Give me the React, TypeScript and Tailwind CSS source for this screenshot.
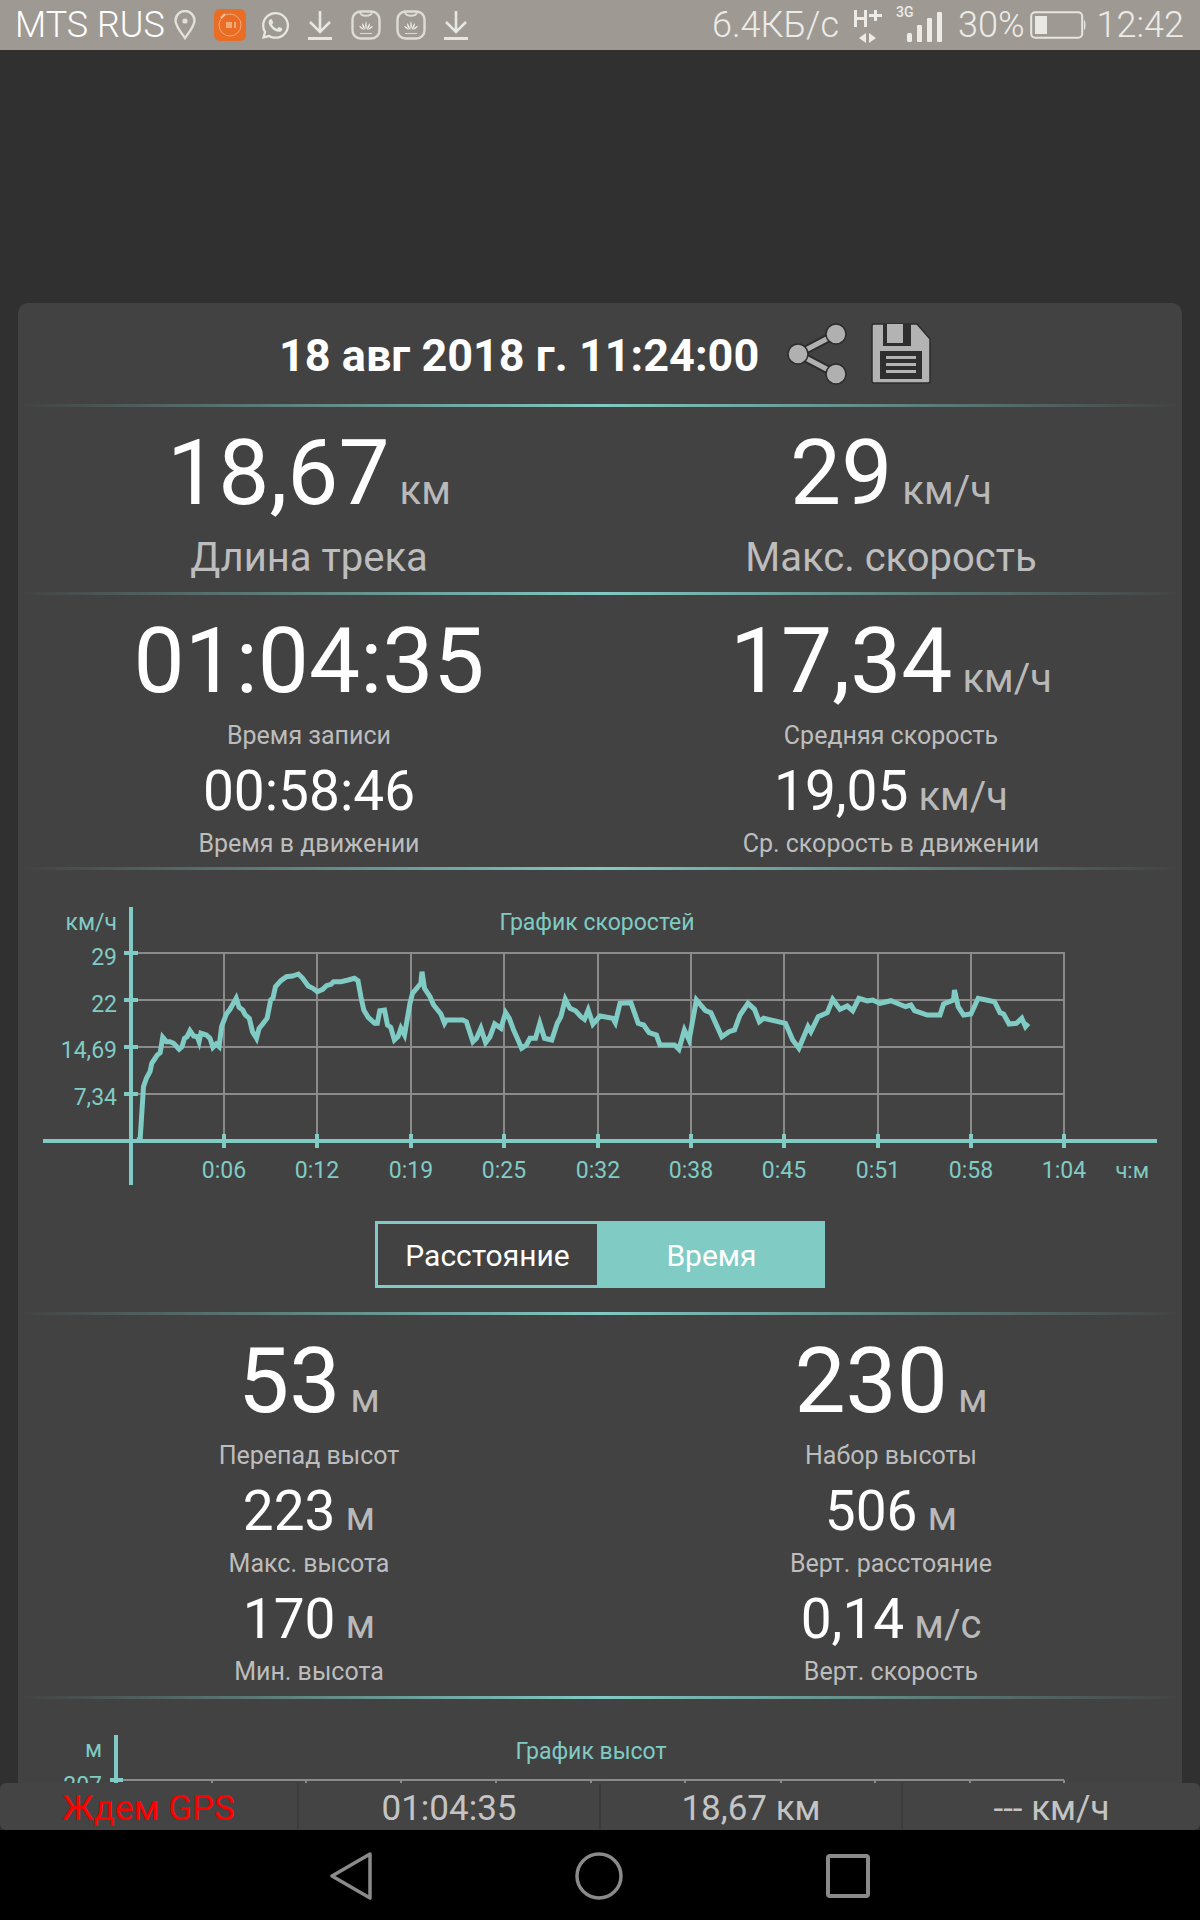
import React from 'react';
import { FaWhatsapp } from 'react-icons/fa';

const TEAL = '#80cbc4';
const GRID_X = [224, 317, 411, 504, 598, 691, 784, 878, 971, 1064];
const GRID_Y = [953, 1000, 1047, 1094];
const X_LABELS = ['0:06', '0:12', '0:19', '0:25', '0:32', '0:38', '0:45', '0:51', '0:58', '1:04'];
const Y_LABELS: [string, number][] = [['29', 965], ['22', 1012], ['14,69', 1058], ['7,34', 1105]];
const ALT_GRID_X = [212, 306, 401, 496, 591, 685, 781, 875, 970, 1064];

// traced from the crops: [x, y] in crop units, converted to page px below
const LEFT_TRACE = [
  [297, 750], [303, 745], [312, 590], [320, 565], [330, 545], [335, 520], [350, 495], [358, 488], [365, 442], [375, 455],
  [385, 455], [395, 460], [410, 478], [418, 470], [425, 445], [432, 440], [440, 422], [450, 438], [460, 440], [465, 455],
  [470, 430], [485, 435], [495, 445], [503, 472], [512, 462], [520, 470], [527, 410], [540, 372], [550, 358], [567, 325],
  [575, 352], [585, 360], [592, 375], [603, 385], [612, 425], [623, 445], [630, 415], [640, 402], [652, 385], [662, 330],
  [668, 325], [675, 290], [690, 272], [705, 260], [722, 258], [738, 252], [750, 265], [765, 288], [778, 295], [790, 305],
  [805, 298], [815, 287], [828, 283], [835, 275], [855, 275], [875, 270], [892, 265], [902, 272], [910, 320], [918, 360],
  [930, 382], [948, 400], [955, 400], [962, 362], [975, 360], [983, 405], [992, 412], [1002, 450], [1012, 440], [1020, 415],
  [1030, 435], [1045, 340], [1052, 310], [1075, 280], [1078, 245], [1085, 295], [1100, 320], [1110, 345], [1130, 372], [1140, 400],
  [1145, 390], [1190, 390], [1200, 395], [1218, 455], [1228, 445], [1240, 415], [1253, 458], [1265, 440], [1278, 402], [1295, 415],
  [1308, 368], [1318, 385], [1330, 420], [1340, 445], [1352, 475], [1365, 465], [1375, 445], [1390, 445], [1402, 400], [1415, 445],
  [1435, 450], [1450, 400], [1460, 380], [1472, 328], [1485, 355], [1500, 362], [1515, 380], [1525, 388], [1535, 360], [1548, 402],
];
const RIGHT_TRACE = [
  [0, 378], [35, 385], [42, 398], [55, 340], [85, 338], [105, 400], [120, 405], [135, 428], [155, 435], [165, 465],
  [205, 465], [217, 478], [232, 420], [245, 450], [265, 330], [290, 362], [305, 368], [335, 440], [355, 425], [370, 420],
  [385, 375], [407, 340], [425, 358], [438, 395], [450, 385], [510, 400], [530, 450], [547, 475], [572, 410], [580, 425],
  [600, 380], [625, 368], [640, 328], [660, 358], [680, 348], [695, 362], [712, 325], [735, 333], [750, 330], [770, 340],
  [800, 332], [840, 350], [855, 345], [865, 362], [900, 375], [935, 375], [945, 342], [972, 330], [975, 300], [985, 350],
  [1000, 375], [1020, 372], [1040, 325], [1085, 335], [1100, 368], [1110, 372], [1125, 402], [1145, 400], [1160, 385], [1170, 410],
  [1178, 400],
];
const speedLine = [
  ...LEFT_TRACE.map(([x, y]) => `${(30 + x / 2.75).toFixed(1)},${(890 + y / 3).toFixed(1)}`),
  ...RIGHT_TRACE.map(([x, y]) => `${(600 + x / 2.75).toFixed(1)},${(890 + y / 3).toFixed(1)}`),
].join(' ');

function Divider() {
  return <div className="h-[3px] w-full bg-gradient-to-r from-transparent via-[#80cbc4] to-transparent" />;
}

function DownloadIcon() {
  return (
    <svg width="24" height="32" viewBox="0 0 24 32" fill="none" stroke="#e6e6e2" strokeWidth="2.6">
      <path d="M12 2v20M2 13l10 10 10-10" />
      <path d="M0 29.5h24" strokeWidth="3" />
    </svg>
  );
}

function HuaweiBandIcon() {
  return (
    <svg width="30" height="30" viewBox="0 0 30 30" fill="none">
      <rect x="1.5" y="1.5" width="27" height="27" rx="8" stroke="#dedcd7" strokeWidth="2.4" />
      <path d="M9 2c0 5 12 5 12 0" stroke="#dedcd7" strokeWidth="2" />
      <path d="M15 20c-1-3-1-6 0-9 1 3 1 6 0 9zM14 20c-2-2-3-4-3-7 2 2 3 4 3 7zM16 20c2-2 3-4 3-7-2 2-3 4-3 7zM13 20c-2-1-4-2-5-4 2 0 4 2 5 4zM17 20c2-1 4-2 5-4-2 0-4 2-5 4z" fill="#f0efec" />
      <path d="M9 23.5h12" stroke="#dedcd7" strokeWidth="1" />
    </svg>
  );
}

function StatusBar() {
  return (
    <div className="h-[50px] shrink-0 bg-[#9e9a93] flex items-center justify-between pl-[15px] pr-[16px] font-[Roboto,sans-serif] font-light text-[36px] text-[#ecebe8]">
      <div className="flex items-center">
        <span className="text-white">MTS RUS</span>
        <svg className="ml-[9px]" width="22" height="30" viewBox="0 0 22 30" fill="none" stroke="#e2e0db" strokeWidth="2.4">
          <path d="M11 28C6 21 1.5 16 1.5 10.500a9.500 9.500 0 0 1 19 0C20.500 16 16 21 11 28z" />
          <circle cx="11" cy="11" r="2.600" fill="#e2e0db" stroke="none" />
        </svg>
        <svg className="ml-[18px]" width="32" height="32" viewBox="0 0 32 32" fill="none">
          <rect width="32" height="32" rx="6" fill="#e96d25" />
          <circle cx="16" cy="16" r="11" stroke="#f3a878" strokeWidth="1" />
          <path d="M7 9l4-4" stroke="#f6c6a6" strokeWidth="2" />
          <path d="M12 13h6v6h-6zM20 13h2v6h-2z" fill="#f3a878" />
        </svg>
        <FaWhatsapp className="ml-[14px]" size={31} color="#e6e6e2" />
        <div className="ml-[17px]"><DownloadIcon /></div>
        <div className="ml-[19px]"><HuaweiBandIcon /></div>
        <div className="ml-[15px]"><HuaweiBandIcon /></div>
        <div className="ml-[18px]"><DownloadIcon /></div>
      </div>
      <div className="flex items-center">
        <span>6.4КБ/с</span>
        <svg className="ml-[14px]" width="30" height="40" viewBox="0 0 30 40" fill="#ecebe8">
          <path d="M1 5h3v7h7V5h3v17h-3v-7H4v7H1zM21 5h3v4h5v3h-5v4h-3v-4h-5V9h5z" />
          <path d="M13 28v10l-7-5zM16 28v10l7-5z" />
        </svg>
        <svg className="ml-[13px]" width="47" height="42" viewBox="0 0 47 42" fill="#ecebe8">
          <text x="0" y="13" fontSize="14" fontWeight="500" fontFamily="Roboto, sans-serif">3G</text>
          <rect x="11" y="29" width="5" height="9" rx="1.500" />
          <rect x="21" y="21" width="5" height="17" rx="1" />
          <rect x="31" y="14" width="5" height="24" rx="1" />
          <rect x="41" y="8" width="5" height="30" rx="1" />
        </svg>
        <span className="ml-[15px]">30%</span>
        <svg className="ml-[5px]" width="57" height="28" viewBox="0 0 57 28" fill="none">
          <rect x="1.200" y="1.200" width="51" height="25.600" rx="4" stroke="#e6e5e1" strokeWidth="2" />
          <rect x="5" y="5" width="12" height="18" fill="#e9e8e4" />
          <path d="M54 9c2 0 2 10 0 10z" fill="#e6e5e1" />
        </svg>
        <span className="ml-[10px]">12:42</span>
      </div>
    </div>
  );
}

function ShareIcon() {
  return (
    <svg width="60" height="62" viewBox="0 0 60 62" fill="none">
      <g stroke="#2c2c2c" strokeWidth="9">
        <path d="M49 11L11 31l38 20" />
      </g>
      <path d="M49 11L11 31l38 20" stroke="#b0b0b0" strokeWidth="5" />
      <circle cx="49" cy="11" r="10" fill="#b0b0b0" stroke="#2c2c2c" strokeWidth="1.500" />
      <circle cx="11" cy="31" r="10" fill="#b0b0b0" stroke="#2c2c2c" strokeWidth="1.500" />
      <circle cx="49" cy="51" r="10" fill="#b0b0b0" stroke="#2c2c2c" strokeWidth="1.500" />
    </svg>
  );
}

function SaveIcon() {
  return (
    <svg width="60" height="62" viewBox="0 0 60 62">
      <path d="M1 3a2 2 0 0 1 2-2h43l13 15v42a2 2 0 0 1-2 2H3a2 2 0 0 1-2-2z" fill="#b3b3b3" stroke="#2c2c2c" strokeWidth="1.500" />
      <path d="M12 1h28v22H12z" fill="#2f2f2f" />
      <path d="M16 1h16v19H16z" fill="#b3b3b3" />
      <rect x="9" y="28" width="42" height="28" fill="#2f2f2f" />
      <rect x="15" y="33" width="30" height="3" fill="#b3b3b3" />
      <rect x="15" y="40" width="30" height="3" fill="#b3b3b3" />
      <rect x="15" y="47" width="30" height="3" fill="#b3b3b3" />
    </svg>
  );
}

function Stat({ value, unit, label, size }: { value: string; unit?: string; label: string; size: 'xl' | 'md' }) {
  const xl = size === 'xl';
  return (
    <div className={xl ? 'flex flex-col items-center' : 'flex flex-col items-center mt-[8px]'}>
      <div className={xl ? 'flex items-baseline h-[92px] leading-[92px]' : 'flex items-baseline h-[62px] leading-[62px]'}>
        <span className={xl ? 'text-[91px] text-white' : 'text-[55px] text-white'}>{value}</span>
        {unit && <span className={xl ? 'ml-[10px] text-[40px] text-[#b9b9b9]' : 'ml-[10px] text-[40px] text-[#b9b9b9]'}>{unit}</span>}
      </div>
      <div className={xl ? 'mt-[13px] text-[25px] leading-[32px] text-[#bdbdbd]' : 'mt-[6px] text-[25px] leading-[32px] text-[#bdbdbd]'}>{label}</div>
    </div>
  );
}

function SpeedChart() {
  return (
    <svg className="block w-full h-[343px]" viewBox="18 870 1164 343" fontFamily="Roboto, sans-serif" fill={TEAL} fontSize="23">
      <g stroke="#8b8b8b" strokeWidth="2">
        {GRID_Y.map((y) => <line key={y} x1="131" x2="1065" y1={y} y2={y} />)}
        {GRID_X.map((x) => <line key={x} x1={x} x2={x} y1="952" y2="1141" />)}
      </g>
      <polyline points={speedLine} fill="none" stroke={TEAL} strokeWidth="5" strokeLinejoin="miter" />
      <g stroke={TEAL} strokeWidth="4">
        <line x1="43" x2="1157" y1="1141" y2="1141" />
        <line x1="131" x2="131" y1="907" y2="1185" />
        {GRID_Y.map((y) => <line key={y} x1="124" x2="138" y1={y} y2={y} />)}
        {GRID_X.map((x) => <line key={x} x1={x} x2={x} y1="1134" y2="1148" />)}
      </g>
      <text x="117" y="930" textAnchor="end">км/ч</text>
      {Y_LABELS.map(([t, y]) => <text key={t} x="117" y={y} textAnchor="end">{t}</text>)}
      {X_LABELS.map((t, i) => <text key={t} x={GRID_X[i]} y="1178" textAnchor="middle">{t}</text>)}
      <text x="1149" y="1178" textAnchor="end" fontSize="22">ч:м</text>
      <text x="597" y="930" textAnchor="middle">График скоростей</text>
    </svg>
  );
}

function AltitudeChart() {
  return (
    <svg className="block w-full h-[100px]" viewBox="18 1700 1164 100" fontFamily="Roboto, sans-serif" fill={TEAL} fontSize="23">
      <g stroke="#8b8b8b" strokeWidth="2">
        <line x1="116" x2="1064" y1="1781" y2="1781" />
        {ALT_GRID_X.map((x) => <line key={x} x1={x} x2={x} y1="1781" y2="1800" />)}
      </g>
      <g stroke={TEAL} strokeWidth="4">
        <line x1="116" x2="116" y1="1736" y2="1800" />
        <line x1="110" x2="123" y1="1781" y2="1781" />
      </g>
      <text x="102" y="1758" textAnchor="end">м</text>
      <text x="102" y="1794" textAnchor="end">207</text>
      <text x="591" y="1760" textAnchor="middle">График высот</text>
    </svg>
  );
}

function BottomBar() {
  const cell = 'flex items-center justify-center text-[35px] text-[#c4c4c4]';
  return (
    <div className="h-[47px] shrink-0 bg-[#444444] rounded-[6px] grid grid-cols-[297px_302px_302px_299px] font-[Roboto,sans-serif]">
      <div className={`${cell} !text-[#ff0000]`}>Ждем GPS</div>
      <div className={`${cell} border-l-2 border-[#3c3c3c]`}>01:04:35</div>
      <div className={`${cell} border-l-2 border-[#3c3c3c]`}>18,67 км</div>
      <div className={`${cell} border-l-2 border-[#3c3c3c]`}>--- км/ч</div>
    </div>
  );
}

function NavBar() {
  return (
    <div className="h-[90px] shrink-0 bg-black flex items-center pl-[330px] pt-[2px]">
      <svg width="42" height="48" viewBox="0 0 42 48" fill="none" stroke="#8a8a8a" strokeWidth="3.500" strokeLinejoin="round">
        <path d="M40 2L2 24l38 22z" />
      </svg>
      <svg className="ml-[203px]" width="48" height="48" viewBox="0 0 48 48" fill="none" stroke="#8a8a8a" strokeWidth="3.500">
        <circle cx="24" cy="24" r="22" />
      </svg>
      <svg className="ml-[203px]" width="44" height="44" viewBox="0 0 44 44" fill="none" stroke="#8a8a8a" strokeWidth="4">
        <rect x="2" y="2" width="40" height="40" rx="2" />
      </svg>
    </div>
  );
}

export default function App() {
  return (
    <div className="h-[1920px] w-[1200px] flex flex-col bg-[#303030] font-[Roboto,sans-serif] overflow-hidden">
      <StatusBar />
      <div className="h-[1733px] shrink-0 overflow-hidden px-[18px] pt-[253px]">
        <div className="bg-[#424242] rounded-[10px]">
          <div className="h-[101px] flex items-center pl-[261px] pt-[4px]">
            <span className="text-[45px] font-bold text-white">18 авг 2018 г. 11:24:00</span>
            <div className="ml-[28px] -mt-[4px]"><ShareIcon /></div>
            <div className="ml-[24px] -mt-[4px]"><SaveIcon /></div>
          </div>
          <Divider />
          <div className="h-[185px] grid grid-cols-2 pt-[20px]">
            {[
              { value: '18,67', unit: 'км', label: 'Длина трека' },
              { value: '29', unit: 'км/ч', label: 'Макс. скорость' },
            ].map((s) => (
              <div key={s.label} className="flex flex-col items-center">
                <div className="flex items-baseline h-[92px] leading-[92px]">
                  <span className="text-[91px] text-white">{s.value}</span>
                  <span className="ml-[10px] text-[40px] text-[#b9b9b9]">{s.unit}</span>
                </div>
                <div className="mt-[15px] text-[40px] leading-[48px] text-[#bdbdbd]">{s.label}</div>
              </div>
            ))}
          </div>
          <Divider />
          <div className="h-[272px] grid grid-cols-2 pt-[20px]">
            <div className="flex flex-col items-center">
              <Stat value="01:04:35" label="Время записи" size="xl" />
              <Stat value="00:58:46" label="Время в движении" size="md" />
            </div>
            <div className="flex flex-col items-center">
              <Stat value="17,34" unit="км/ч" label="Средняя скорость" size="xl" />
              <Stat value="19,05" unit="км/ч" label="Ср. скорость в движении" size="md" />
            </div>
          </div>
          <Divider />
          <SpeedChart />
          <div className="mt-[8px] flex justify-center">
            <div className="flex h-[67px] w-[450px] border-[3px] border-[#80cbc4] bg-[#80cbc4] text-[30px]">
              <div className="w-[219px] bg-[#424242] text-white flex items-center justify-center pt-[2px]">Расстояние</div>
              <div className="flex-1 text-white flex items-center justify-center pt-[2px] pl-[4px]">Время</div>
            </div>
          </div>
          <div className="mt-[24px]"><Divider /></div>
          <div className="h-[381px] grid grid-cols-2 pt-[20px]">
            <div className="flex flex-col items-center">
              <Stat value="53" unit="м" label="Перепад высот" size="xl" />
              <Stat value="223" unit="м" label="Макс. высота" size="md" />
              <Stat value="170" unit="м" label="Мин. высота" size="md" />
            </div>
            <div className="flex flex-col items-center">
              <Stat value="230" unit="м" label="Набор высоты" size="xl" />
              <Stat value="506" unit="м" label="Верт. расстояние" size="md" />
              <Stat value="0,14" unit="м/с" label="Верт. скорость" size="md" />
            </div>
          </div>
          <Divider />
          <AltitudeChart />
        </div>
      </div>
      <BottomBar />
      <NavBar />
    </div>
  );
}
